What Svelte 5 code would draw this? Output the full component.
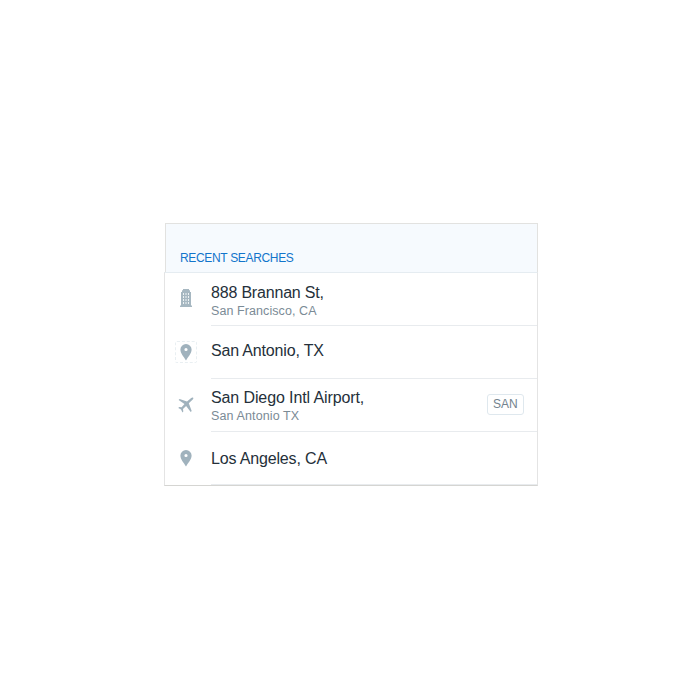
<script>
  const rows = [
    { icon: 'building', title: '888 Brannan St,', sub: 'San Francisco, CA', ts: -0.19, ss: 0.08, top: 10, gap: 1, iconTop: 14 },
    { icon: 'pin', framed: true, title: 'San Antonio, TX', ts: -0.17, top: 15, gap: 0, iconTop: 15 },
    { icon: 'plane', title: 'San Diego Intl Airport,', sub: 'San Antonio TX', code: 'SAN', ts: -0.11, ss: 0.12, top: 9, gap: 1, iconTop: 15 },
    { icon: 'pin', title: 'Los Angeles, CA', ts: -0.16, top: 17, gap: 0, iconTop: 15 }
  ];
</script>

<main>
  <section class="panel">
    <header><h2>RECENT SEARCHES</h2></header>
    <ul>
      {#each rows as row}
        <li>
          <span class="icon" class:framed={row.framed} style:margin-top="{row.iconTop}px">
            {#if row.icon === 'building'}
              <svg width="12" height="18" viewBox="0 0 12 18">
                <path fill="#a6b7c1" d="M3 0h6v1.200h1V3h1v13.500h1V18H0v-1.500h1V3h1V1.200h1z" />
                <path stroke="#edf2f4" stroke-width="1" d="M3.500 4v11.500M6 4v11.500M8.500 4v11.500" stroke-dasharray="2 1" />
              </svg>
            {:else if row.icon === 'pin'}
              <svg width="12" height="17" viewBox="0 0 12 17">
                <path fill="#a0b2bd" fill-rule="evenodd" d="M6 0a5.600 5.600 0 0 0-5.600 5.700C.4 9.400 4 12.800 6 16.600 8 12.800 11.600 9.400 11.600 5.700A5.600 5.600 0 0 0 6 0zm0 3.900a1.600 1.600 0 1 1 0 3.200 1.600 1.600 0 0 1 0-3.200z" />
              </svg>
            {:else}
              <svg width="16" height="16" viewBox="0 0 16 16">
                <path fill="#a0b2bd" d="M15.200.8c.4.500 0 1.200-.7 1.900l-3.700 3.600 2.900 7.600-1 1-4.600-6-3.100 3.100.3 2.500-.8.900-1.500-2.900L.3 10.900l.8-.8 2.500.2 2.900-3.200L.6 2.900l1-1 7.400 2.600L13.200 1c.7-.6 1.600-.7 2-.2z" />
              </svg>
            {/if}
          </span>
          <div class="body">
            <div class="text" style:padding-top="{row.top}px">
              <div class="title" style:letter-spacing="{row.ts}px">{row.title}</div>
              {#if row.sub}<div class="sub" style:letter-spacing="{row.ss}px" style:margin-top="{row.gap}px">{row.sub}</div>{/if}
            </div>
            {#if row.code}<span class="code">{row.code}</span>{/if}
          </div>
        </li>
      {/each}
    </ul>
  </section>
</main>

<style>
  :global(body) { background: #fff; }
  main {
    box-sizing: border-box;
    height: 700px;
    padding: 223px 0 0 164px;
    font-family: "Liberation Sans", Arial, sans-serif;
  }
  .panel { width: 374.400px; }
  header {
    box-sizing: border-box;
    height: 49px;
    margin-left: 1px;
    padding: 27px 0 0 14px;
    border: 1px solid #e2e2e0;
    border-bottom: 0;
    background: #f6fafe;
  }
  h2 {
    margin: 0;
    font-size: 12px;
    line-height: 14px;
    font-weight: 400;
    letter-spacing: -0.33px;
    color: #1275cb;
  }
  ul {
    box-sizing: border-box;
    height: 214px;
    margin: 0;
    padding: 0;
    list-style: none;
    border: 1px solid #e4e4e4;
    border-top-color: #e5ecf1;
    border-bottom-color: #d5d5d2;
  }
  li { display: flex; height: 53.100px; }
  .icon {
    box-sizing: border-box;
    display: flex;
    flex: none;
    align-items: center;
    justify-content: center;
    width: 22px;
    height: 22px;
    margin: 0 13.500px 0 10px;
    border: 1px solid transparent;
  }
  .framed { border: 1px dashed #e9eff2; border-radius: 2px; }
  svg { display: block; flex: none; }
  .body {
    box-sizing: border-box;
    flex: 1;
    display: flex;
    align-items: flex-start;
    justify-content: space-between;
    padding-right: 13.500px;
    border-bottom: 1px solid #e8ebee;
  }
  .text { padding-left: .5px; white-space: nowrap; }
  .title { font-size: 16px; line-height: 19px; color: #25303a; }
  .sub { font-size: 12.500px; line-height: 17px; color: #7b8b96; }
  .code {
    box-sizing: border-box;
    width: 37px;
    height: 21px;
    margin-top: 15px;
    border: 1px solid #dfe8ee;
    border-radius: 3px;
    font-size: 12px;
    line-height: 19px;
    text-align: center;
    color: #73838e;
  }
</style>
